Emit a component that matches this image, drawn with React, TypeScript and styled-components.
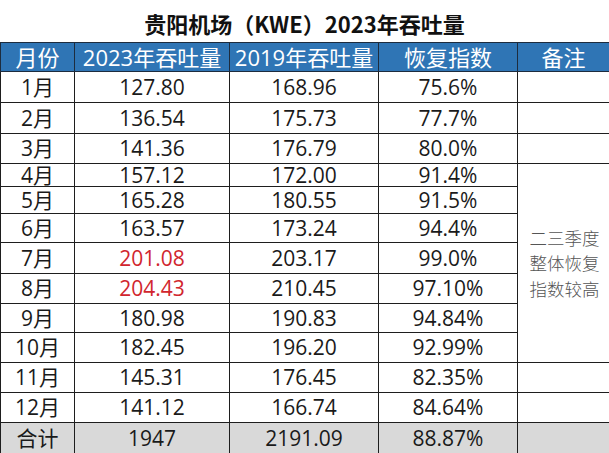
import React from 'react';
import styled, { createGlobalStyle } from 'styled-components';

const GlobalStyle = createGlobalStyle`
  html, body {
    margin: 0;
    padding: 0;
    background: #ffffff;
  }
  body {
    font-family: "Open Sans", "Noto Sans CJK SC", sans-serif;
  }
`;

type MonthRow = {
  month: string;
  y2023: string;
  y2019: string;
  index: string;
  h: number;
  red?: boolean;
};

const rows: MonthRow[] = [
  { month: '1月', y2023: '127.80', y2019: '168.96', index: '75.6%', h: 31 },
  { month: '2月', y2023: '136.54', y2019: '175.73', index: '77.7%', h: 31 },
  { month: '3月', y2023: '141.36', y2019: '176.79', index: '80.0%', h: 30 },
  { month: '4月', y2023: '157.12', y2019: '172.00', index: '91.4%', h: 23 },
  { month: '5月', y2023: '165.28', y2019: '180.55', index: '91.5%', h: 27 },
  { month: '6月', y2023: '163.57', y2019: '173.24', index: '94.4%', h: 29 },
  { month: '7月', y2023: '201.08', y2019: '203.17', index: '99.0%', h: 31, red: true },
  { month: '8月', y2023: '204.43', y2019: '210.45', index: '97.10%', h: 30, red: true },
  { month: '9月', y2023: '180.98', y2019: '190.83', index: '94.84%', h: 29 },
  { month: '10月', y2023: '182.45', y2019: '196.20', index: '92.99%', h: 30 },
  { month: '11月', y2023: '145.31', y2019: '176.45', index: '82.35%', h: 30 },
  { month: '12月', y2023: '141.12', y2019: '166.74', index: '84.64%', h: 30 },
];

// rows 4月..10月 share one note cell
const NOTE_START = 3;
const NOTE_SPAN = 7;

const Page = styled.div`
  width: 609px;
  display: flex;
  flex-direction: column;
`;

const Title = styled.h1`
  margin: 0;
  height: 42px;
  display: flex;
  align-items: center;
  justify-content: center;
  font-family: "Noto Sans CJK SC", sans-serif;
  font-weight: 700;
  font-size: 22px;
  line-height: 1;
  color: #111;
  padding-top: 4px;
  box-sizing: border-box;
`;

const Table = styled.table`
  width: 609px;
  border-collapse: collapse;
  table-layout: fixed;
`;

const Col = styled.col<{ $w: number }>`
  width: ${p => p.$w}px;
`;

const HeadCell = styled.th`
  background: #2f75b5;
  color: #ffffff;
  font-weight: 400;
  font-size: 22px;
  height: 28px;
  padding: 0;
  border: 1px solid #1d2c3e;
  line-height: 1;
  white-space: nowrap;
`;

const Row = styled.tr<{ $h: number; $total?: boolean }>`
  height: ${p => p.$h}px;
  background: ${p => (p.$total ? '#d9d9d9' : '#ffffff')};
`;

const Cell = styled.td<{ $red?: boolean }>`
  padding: 0;
  border: 1px solid #1e1e1e;
  text-align: center;
  font-size: 21px;
  line-height: 1;
  color: ${p => (p.$red ? '#d1262e' : '#1a1a1a')};
  white-space: nowrap;
`;

const NoteCell = styled.td`
  padding: 0 0 0 2px;
  border: 1px solid #1e1e1e;
  text-align: center;
  vertical-align: middle;
  font-family: "Noto Sans CJK SC", serif;
  font-weight: 300;
  font-size: 17.5px;
  line-height: 25.5px;
  color: #555555;
`;

export default function App() {
  return (
    <Page>
      <GlobalStyle />
      <Title>贵阳机场（KWE）2023年吞吐量</Title>
      <Table>
        <colgroup>
          <Col $w={74} />
          <Col $w={155} />
          <Col $w={149} />
          <Col $w={139} />
          <Col $w={92} />
        </colgroup>
        <thead>
          <tr>
            <HeadCell>月份</HeadCell>
            <HeadCell>2023年吞吐量</HeadCell>
            <HeadCell>2019年吞吐量</HeadCell>
            <HeadCell>恢复指数</HeadCell>
            <HeadCell>备注</HeadCell>
          </tr>
        </thead>
        <tbody>
          {rows.map((r, i) => (
            <Row key={r.month} $h={r.h}>
              <Cell>{r.month}</Cell>
              <Cell $red={r.red}>{r.y2023}</Cell>
              <Cell>{r.y2019}</Cell>
              <Cell>{r.index}</Cell>
              {i === NOTE_START ? (
                <NoteCell rowSpan={NOTE_SPAN}>
                  二三季度
                  <br />
                  整体恢复
                  <br />
                  指数较高
                </NoteCell>
              ) : i > NOTE_START && i < NOTE_START + NOTE_SPAN ? null : (
                <Cell />
              )}
            </Row>
          ))}
          <Row $h={32} $total>
            <Cell>合计</Cell>
            <Cell>1947</Cell>
            <Cell>2191.09</Cell>
            <Cell>88.87%</Cell>
            <Cell />
          </Row>
        </tbody>
      </Table>
    </Page>
  );
}
